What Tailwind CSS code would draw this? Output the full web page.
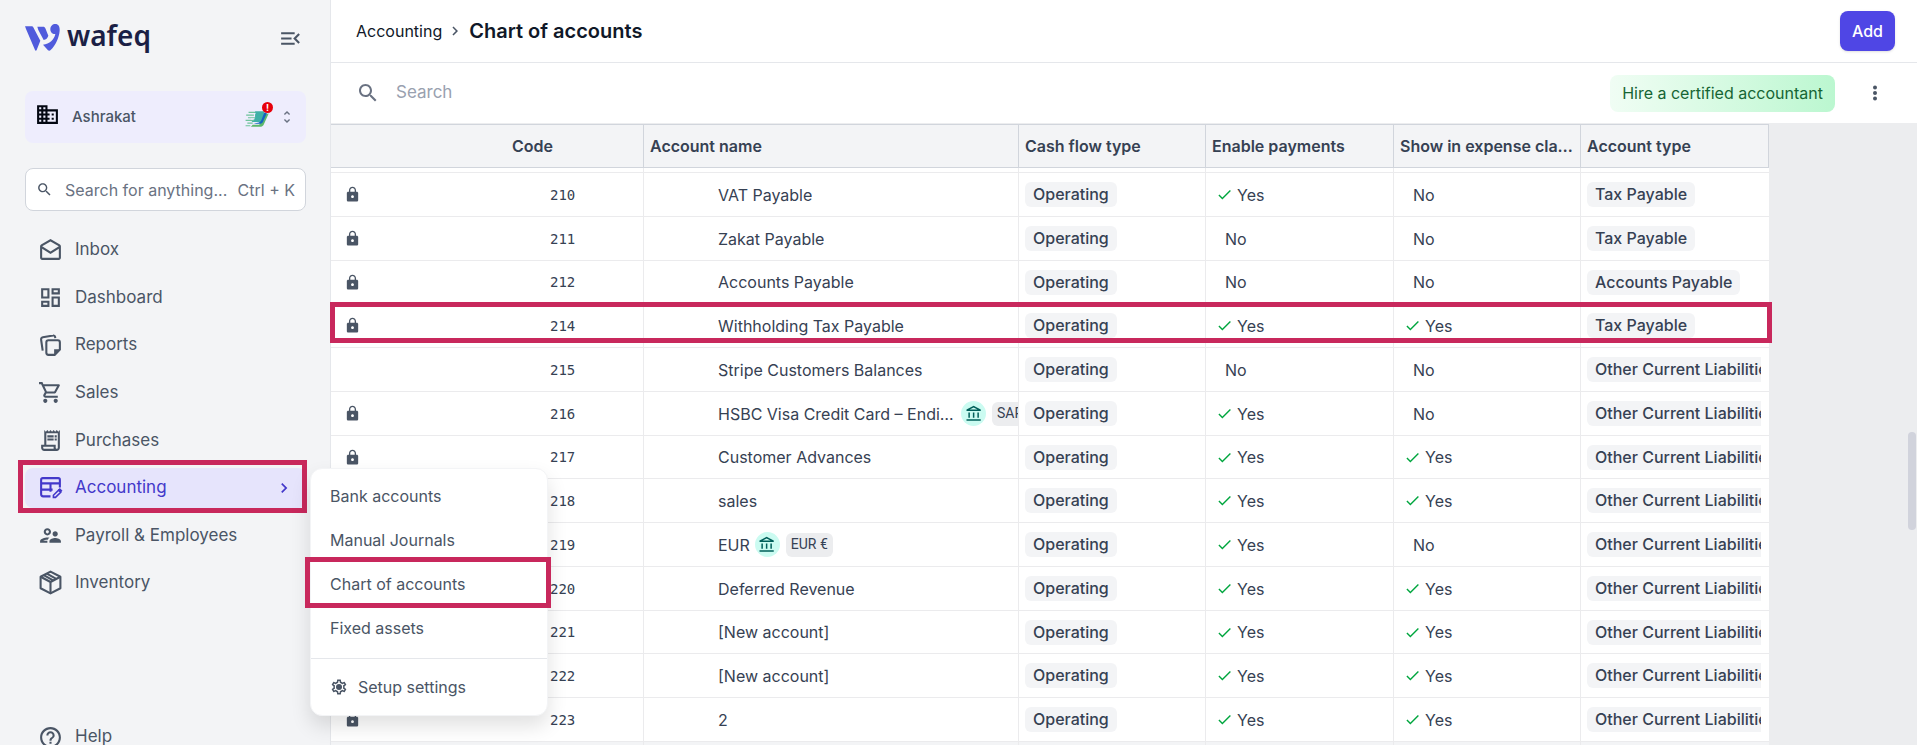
<!DOCTYPE html>
<html lang="en">

<head>
  <meta charset="UTF-8">
  <meta name="viewport" content="width=device-width, initial-scale=1.0">
  <title>Chart of accounts - Wafeq</title>
  <script src="https://cdn.jsdelivr.net/npm/@tailwindcss/browser@4"></script>
</head>

<body class="h-screen overflow-hidden flex bg-[#ecedef] font-['Inter',sans-serif] text-base text-gray-700">

  <!-- icon set -->
  <svg class="hidden" xmlns="http://www.w3.org/2000/svg">
    <symbol id="i-lock" viewBox="0 0 24 24"><path d="M18 8h-1V6c0-2.76-2.24-5-5-5S7 3.24 7 6v2H6c-1.1 0-2 .9-2 2v10c0 1.1.9 2 2 2h12c1.1 0 2-.9 2-2V10c0-1.1-.9-2-2-2zm-6 9c-1.1 0-2-.9-2-2s.9-2 2-2 2 .9 2 2-.9 2-2 2zm3.1-9H8.9V6c0-1.71 1.39-3.1 3.1-3.1 1.71 0 3.1 1.39 3.1 3.1v2z"/></symbol>
    <symbol id="i-search" viewBox="0 0 24 24"><path d="M15.5 14h-.79l-.28-.27C15.41 12.59 16 11.11 16 9.5 16 5.91 13.09 3 9.5 3S3 5.91 3 9.5 5.91 16 9.5 16c1.61 0 3.09-.59 4.23-1.57l.27.28v.79l5 4.99L20.49 19l-4.99-5zm-6 0C7.01 14 5 11.99 5 9.5S7.01 5 9.5 5 14 7.01 14 9.5 11.99 14 9.5 14z"/></symbol>
    <symbol id="i-check" viewBox="0 0 24 24"><path d="M9 16.17L4.83 12l-1.42 1.41L9 19 21 7l-1.41-1.41z"/></symbol>
    <symbol id="i-chevron" viewBox="0 0 24 24"><path d="M10 6L8.59 7.41 13.17 12l-4.58 4.59L10 18l6-6z"/></symbol>
    <symbol id="i-bank" viewBox="0 0 24 24"><path d="M6.5 10h-2v7h2v-7zm6 0h-2v7h2v-7zm8.5 9H2v2h19v-2zm-2.5-9h-2v7h2v-7zm-7-6.74L16.71 6H6.29l5.21-2.74m0-2.26L2 6v2h19V6l-9.5-5z"/></symbol>
  </svg>

  <aside class="w-[331px] shrink-0 h-full flex flex-col pl-[25px] pr-6 bg-gray-100 border-r border-gray-200">
    <div class="h-[91px] flex items-start justify-between pr-[3px]">
      <a href="#" class="flex items-center gap-[7px] pt-[17px]" aria-label="wafeq">
        <svg class="w-[35px] h-[27px] mt-1" viewBox="0 0 105 81" fill="#505bdc">
          <path d="M0 7h19c3 0 5 1 7 5l20 38-11 28c-1 3-4 3-5 0L3 15C2 12 1 9 0 7z"/>
          <path d="M37 8h17c4 0 6 2 7 5l9 22c-2 7-7 12-14 13l-16-30c-1-3-2-7-3-10z"/>
          <path d="M54 62c20-3 33-14 37-32-9 2-15-6-15-14C76 6 83 0 91 0c9 0 14 8 13 20-2 21-12 44-27 58-2 3-6 3-8 1z"/>
        </svg>
        <span class="font-['Noto_Sans'] font-semibold text-[28px] leading-9 text-[#1b1f45]">wafeq</span>
      </a>
      <button type="button" class="pt-[26px] text-gray-600" aria-label="Collapse menu">
        <svg class="size-[25px]" viewBox="0 0 24 24" fill="currentColor"><path d="M3 18h13v-2H3v2zM3 13h10v-2H3v2zm0-7v2h13V6H3zm18 9.59L17.42 12 21 8.41 19.59 7l-5 5 5 5L21 15.59z"/></svg>
      </button>
    </div>

    <button type="button" class="h-[52px] shrink-0 flex items-center rounded-lg bg-[#eeedfd] pl-[10px] pr-[11px]">
      <svg class="size-[25px] mb-[6px] text-gray-950" viewBox="0 0 24 24" fill="currentColor"><path d="M12 7V3H2v18h20V7H12zM6 19H4v-2h2v2zm0-4H4v-2h2v2zm0-4H4V9h2v2zm0-4H4V5h2v2zm4 12H8v-2h2v2zm0-4H8v-2h2v2zm0-4H8V9h2v2zm0-4H8V5h2v2zm10 12h-8v-2h2v-2h-2v-2h2v-2h-2V9h8v10zm-2-8h-2v2h2v-2zm0 4h-2v2h2v-2z"/></svg>
      <span class="ml-3 text-[15px] font-medium text-gray-600">Ashrakat</span>
      <span class="relative ml-auto mr-[10px]">
        <svg class="w-6 h-[17px] mt-[2px]" viewBox="0 0 81 57">
          <path d="M20 56h34c4 0 7-2 9-6L80 12l-14 2-18 36H26z" fill="#5cb86c"/>
          <path d="M28 46h24c4 0 6-2 8-5L74 10l-14-2-12 34z" fill="#1563c0"/>
          <path d="M34 4h33L55 34c-1 4-4 6-8 6H22l12-14z" fill="#3fb0a6"/>
          <path d="M12 8h22M4 17h26M10 26h24M2 35h28M8 44h18M2 53h16" stroke="#6dc39a" stroke-width="4"/>
          <path d="M24 12h12M20 30h12" stroke="#eeedfd" stroke-width="3"/>
        </svg>
        <span class="absolute -right-1 -top-[6px] size-[11px] rounded-full bg-red-600 text-white text-[9px] leading-[11px] font-bold text-center">!</span>
      </span>
      <svg class="size-4 text-gray-500" viewBox="0 0 24 24" fill="currentColor"><path d="M12 5.83L15.17 9l1.41-1.41L12 3 7.41 7.59 8.83 9 12 5.83zm0 12.34L8.83 15l-1.41 1.41L12 21l4.59-4.59L15.17 15 12 18.17z"/></svg>
    </button>

    <label class="mt-[25px] h-[43px] shrink-0 flex items-center rounded-lg bg-white border border-gray-300 pl-[10px] pr-[10px] text-gray-500">
      <svg class="size-[17px] shrink-0 text-gray-600" fill="currentColor"><use href="#i-search"/></svg>
      <input type="text" placeholder="Search for anything..." class="ml-3 flex-1 min-w-0 text-base placeholder:text-gray-500 outline-none">
      <span>Ctrl + K</span>
    </label>

    <nav class="mt-[19px] h-[373px] shrink-0 flex flex-col justify-between text-[17px] text-gray-600">
      <a href="#" class="h-10 flex items-center gap-3 pl-[13px]">
        <svg class="size-[25px]" viewBox="0 0 24 24" fill="currentColor"><path d="M21.99 8c0-.72-.37-1.35-.94-1.7L12 1 2.95 6.3C2.38 6.65 2 7.28 2 8v11c0 1.100.9 2 2 2h16c1.100 0 2-.9 2-2l-.01-11zm-2 0v.01L12 13 4 8l8-4.680L19.990 8zM4 19v-8.660l8 5.020 7.990-4.990L20 19H4z"/></svg>
        Inbox
      </a>
      <a href="#" class="h-10 flex items-center gap-3 pl-[13px]">
        <svg class="size-[25px]" viewBox="0 0 24 24" fill="currentColor"><path d="M19 5v2h-4V5h4M9 5v6H5V5h4m10 8v6h-4v-6h4M9 17v2H5v-2h4M21 3h-8v6h8V3zM11 3H3v10h8V3zm10 8h-8v10h8V11zm-10 4H3v6h8v-6z"/></svg>
        Dashboard
      </a>
      <a href="#" class="h-10 flex items-center gap-3 pl-[13px]">
        <svg class="size-[25px]" viewBox="0 0 24 24" fill="none" stroke="currentColor" stroke-width="2">
          <path d="M16 21H10a2 2 0 0 1-2-2V9a2 2 0 0 1 2-2h9a2 2 0 0 1 2 2v7z"/>
          <path d="M21.500 15.500h-6v6z" fill="currentColor" stroke="none"/>
          <path d="M4.500 17L3 6.500A2 2 0 0 1 4.600 4.100L14.500 2.400a1.600 1.600 0 0 1 1.900 1.300L16.600 5"/>
        </svg>
        Reports
      </a>
      <a href="#" class="h-10 flex items-center gap-3 pl-[13px]">
        <svg class="size-[25px]" viewBox="0 0 24 24" fill="currentColor"><path d="M15.550 13c.75 0 1.410-.41 1.750-1.030l3.580-6.490c.37-.66-.11-1.480-.87-1.480H5.210l-.94-2H1v2h2l3.600 7.590-1.350 2.440C4.520 15.370 5.480 17 7 17h12v-2H7l1.100-2h7.450zM6.160 6h12.150l-2.760 5H8.530L6.160 6zM7 18c-1.100 0-1.990.9-1.990 2S5.900 22 7 22s2-.9 2-2-.9-2-2-2zm10 0c-1.100 0-1.990.9-1.990 2s.89 2 1.990 2 2-.9 2-2-.9-2-2-2z"/></svg>
        Sales
      </a>
      <a href="#" class="h-10 flex items-center gap-3 pl-[13px]">
        <svg class="size-[25px]" viewBox="0 0 24 24" fill="currentColor"><path d="M19.500 3.500L18 2l-1.500 1.500L15 2l-1.500 1.500L12 2l-1.500 1.500L9 2 7.500 3.500 6 2v14H3v3c0 1.660 1.340 3 3 3h12c1.660 0 3-1.340 3-3V2l-1.500 1.500zM15 20H6c-.55 0-1-.45-1-1v-1h10v2zm4-1c0 .55-.45 1-1 1s-1-.45-1-1v-3H8V5h11v14z"/><path d="M9 7h6v2H9zM16 7h2v2h-2zM9 10h6v2H9zM16 10h2v2h-2z"/></svg>
        Purchases
      </a>
      <div class="relative h-10">
        <a href="#" class="h-full flex items-center gap-3 pl-[13px] rounded-lg bg-[#e6e4fc] text-[#4338ca]">
          <svg class="size-[25px]" viewBox="0 0 24 24" fill="none" stroke="currentColor" stroke-width="2">
            <path d="M12 20.500H5a2 2 0 0 1-2-2V4.500a1.500 1.500 0 0 1 1.500-1.500h15A1.500 1.500 0 0 1 21 4.500V12"/>
            <path d="M3 8h18M3 14h11M12 8v8" />
            <path d="M14.800 21.500v-2l5-5 2 2-5 5z" stroke-width="1.500"/>
            <path d="M19 14.500l2-2 2.500 2.500-2 2z" fill="currentColor" stroke="none"/>
          </svg>
          Accounting
          <svg class="ml-auto mr-3 size-5" fill="currentColor"><use href="#i-chevron"/></svg>
        </a>
        <div class="absolute -left-[7px] -right-px -top-2 -bottom-[5px] border-[5px] border-[#c8285c] pointer-events-none"></div>

        <div class="absolute z-20 left-[285px] top-0 w-[238px] rounded-xl bg-white text-base text-gray-600 border border-gray-100 shadow-[0_10px_20px_rgba(0,0,0,0.12)]">
          <div class="pt-[5px] pb-2">
            <a href="#" class="h-11 flex items-center px-[19px]">Bank accounts</a>
            <a href="#" class="h-11 flex items-center px-[19px]">Manual Journals</a>
            <a href="#" class="relative h-11 flex items-center px-[19px]">
              Chart of accounts
              <span class="absolute -left-[6px] -right-[4px] -top-[5px] -bottom-[2px] border-[5px] border-[#c8285c]"></span>
            </a>
            <a href="#" class="h-11 flex items-center px-[19px]">Fixed assets</a>
          </div>
          <div class="py-[6px] border-t border-gray-200">
            <a href="#" class="h-11 flex items-center gap-[10px] px-[19px]">
              <svg class="size-[18px]" viewBox="0 0 24 24" fill="currentColor"><path d="M19.430 12.980c.04-.32.07-.64.07-.98 0-.34-.03-.66-.07-.98l2.110-1.650c.19-.15.24-.42.12-.64l-2-3.460c-.09-.16-.26-.25-.44-.25-.06 0-.12.01-.17.03l-2.490 1c-.52-.4-1.080-.73-1.690-.98l-.38-2.650C14.460 2.180 14.250 2 14 2h-4c-.25 0-.46.18-.49.42l-.38 2.650c-.61.25-1.170.59-1.690.98l-2.490-1c-.06-.02-.12-.03-.18-.03-.17 0-.34.09-.43.25l-2 3.460c-.13.22-.07.49.12.64l2.110 1.650c-.04.32-.07.65-.07.98 0 .33.03.66.07.98l-2.110 1.650c-.19.15-.24.42-.12.64l2 3.460c.09.16.26.25.44.25.06 0 .12-.01.17-.03l2.490-1c.52.4 1.080.73 1.690.98l.38 2.650c.03.24.24.42.49.42h4c.25 0 .46-.18.49-.42l.38-2.650c.61-.25 1.170-.59 1.690-.98l2.490 1c.06.02.12.03.18.03.17 0 .34-.09.43-.25l2-3.460c.12-.22.07-.49-.12-.64l-2.110-1.650zm-1.980-1.710c.04.31.05.52.05.73 0 .21-.02.43-.05.73l-.14 1.130.89.7 1.080.84-.7 1.210-1.270-.51-1.040-.42-.9.68c-.43.32-.84.56-1.250.73l-1.060.43-.16 1.130-.2 1.350h-1.400l-.19-1.350-.16-1.130-1.060-.43c-.43-.18-.83-.41-1.230-.71l-.91-.7-1.060.43-1.270.51-.7-1.210 1.080-.84.89-.7-.14-1.130c-.03-.31-.05-.54-.05-.74s.02-.43.05-.73l.14-1.130-.89-.7-1.080-.84.7-1.210 1.270.51 1.040.42.9-.68c.43-.32.84-.56 1.250-.73l1.060-.43.16-1.130.2-1.350h1.390l.19 1.350.16 1.130 1.060.43c.43.18.83.41 1.230.71l.91.7 1.060-.43 1.270-.51.7 1.210-1.070.85-.89.7.14 1.130z"/><circle cx="12" cy="12" r="4"/></svg>
              Setup settings
            </a>
          </div>
        </div>
      </div>
      <a href="#" class="h-10 flex items-center gap-3 pl-[13px]">
        <svg class="size-[25px]" viewBox="0 0 24 24" fill="currentColor"><path d="M9 12c1.930 0 3.500-1.570 3.500-3.500S10.930 5 9 5 5.500 6.570 5.500 8.500 7.070 12 9 12zm0-5c.83 0 1.500.67 1.500 1.500S9.830 10 9 10s-1.500-.67-1.500-1.500S8.170 7 9 7zm.05 10H4.770c.99-.5 2.700-1 4.230-1 .11 0 .23.01.34.01.34-.73.93-1.330 1.640-1.810-.73-.13-1.420-.2-1.980-.2-2.340 0-7 1.170-7 3.500V19h7v-1.500c0-.17.02-.34.05-.5zm7.450-2.500c-1.840 0-5.500 1.010-5.500 3V19h11v-1.500c0-1.990-3.660-3-5.500-3zm1.210-1.820c.76-.43 1.290-1.240 1.290-2.180C19 9.120 17.880 8 16.500 8S14 9.120 14 10.500c0 .94.53 1.750 1.290 2.180.36.2.77.32 1.210.32s.85-.12 1.210-.32z"/></svg>
        Payroll &amp; Employees
      </a>
      <a href="#" class="h-10 flex items-center gap-3 pl-[13px]">
        <svg class="size-[25px]" viewBox="0 0 24 24" fill="none" stroke="currentColor" stroke-width="2" stroke-linejoin="round">
          <path d="M12 1.500l9.500 5v11l-9.500 5-9.500-5v-11z"/>
          <path d="M2.500 6.500l9.500 5 9.500-5M12 11.500v11M8.500 3.500l9 5M5.500 5l9 5"/>
        </svg>
        Inventory
      </a>
    </nav>

    <a href="#" class="mt-auto -mb-3 h-10 shrink-0 flex items-center gap-3 pl-[13px] text-[17px] text-gray-600">
      <svg class="size-[25px]" viewBox="0 0 24 24" fill="currentColor"><path d="M11 18h2v-2h-2v2zm1-16C6.480 2 2 6.480 2 12s4.480 10 10 10 10-4.480 10-10S17.520 2 12 2zm0 18c-4.410 0-8-3.590-8-8s3.590-8 8-8 8 3.590 8 8-3.590 8-8 8zm0-14c-2.210 0-4 1.790-4 4h2c0-1.100.9-2 2-2s2 .9 2 2c0 2-3 1.750-3 5h2c0-2.250 3-2.500 3-5 0-2.210-1.790-4-4-4z"/></svg>
      Help
    </a>
  </aside>

  <main class="relative flex-1 min-w-0 h-full overflow-clip [overflow-clip-margin:2px]">
    <header class="h-[63px] flex items-center bg-white border-b border-gray-200 pl-[25px] pr-[22px] text-gray-900">
      <a href="#" class="text-base">Accounting</a>
      <svg class="mx-1 size-[18px] text-gray-600" fill="currentColor"><use href="#i-chevron"/></svg>
      <h1 class="ml-px text-xl font-semibold">Chart of accounts</h1>
      <button type="button" class="ml-auto h-10 px-3 rounded-lg bg-[#4f46e5] text-white font-medium shadow-sm">Add</button>
    </header>

    <div class="h-[60px] flex items-center bg-white pl-[25px] pr-[30px]">
      <label for="search" class="text-gray-500" aria-label="Search"><svg class="size-6" fill="currentColor"><use href="#i-search"/></svg></label>
      <input id="search" type="text" placeholder="Search" class="ml-4 flex-1 min-w-0 text-[17px] placeholder:text-gray-400 outline-none">
      <button type="button" class="h-[37px] px-3 rounded-lg bg-linear-to-r from-[#f0fdf4] to-[#bbf7d0] text-[#166534]">Hire a certified accountant</button>
      <button type="button" class="ml-[28px] text-gray-600" aria-label="More">
        <svg class="size-6" viewBox="0 0 24 24" fill="currentColor"><circle cx="12" cy="6.500" r="2"/><circle cx="12" cy="12" r="2"/><circle cx="12" cy="17.500" r="2"/></svg>
      </button>
    </div>

    <div class="relative w-fit mt-px">
      <table class="w-[1438px] table-fixed border-separate border-spacing-0 bg-white">
        <colgroup>
          <col class="w-[175px]">
          <col class="w-[138px]">
          <col class="w-[375px]">
          <col class="w-[187px]">
          <col class="w-[188px]">
          <col class="w-[187px]">
          <col class="w-[188px]">
        </colgroup>
        <thead class="bg-gray-100 text-left">
          <tr class="h-11 [&>th]:border-y [&>th]:border-gray-300 [&>th]:px-[6px] [&>th]:font-semibold [&>th]:truncate">
            <th></th>
            <th class="border-r">Code</th>
            <th class="border-r">Account name</th>
            <th class="border-r">Cash flow type</th>
            <th class="border-r">Enable payments</th>
            <th class="border-r">Show in expense claims</th>
            <th class="border-r">Account type</th>
          </tr>
        </thead>
        <tbody id="accounts" class="[&>tr]:h-11 [&>tr:nth-child(4n)]:h-[43px] [&_td]:border-b [&_td]:border-[#ebebed] [&_td]:p-0"></tbody>
      </table>
      <div class="absolute -left-px -right-[3px] top-[178px] h-[41px] border-[5px] border-[#c8285c] pointer-events-none"></div>
    </div>

    <div class="absolute right-px top-[432px] w-2 h-[98px] rounded-full bg-[#d1d3dc]"></div>
  </main>

  <script>
    const LIABILITIES = "Other Current Liabilities";

    // locked, code, name, payments, expense claims, type, bank currency
    const accounts = [
      [true, "210", "VAT Payable", true, false, "Tax Payable"],
      [true, "211", "Zakat Payable", false, false, "Tax Payable"],
      [true, "212", "Accounts Payable", false, false, "Accounts Payable"],
      [true, "214", "Withholding Tax Payable", true, true, "Tax Payable"],
      [false, "215", "Stripe Customers Balances", false, false, LIABILITIES],
      [true, "216", "HSBC Visa Credit Card – Ending", true, false, LIABILITIES, "SAR"],
      [true, "217", "Customer Advances", true, true, LIABILITIES],
      [false, "218", "sales", true, true, LIABILITIES],
      [false, "219", "EUR", true, false, LIABILITIES, "EUR €"],
      [false, "220", "Deferred Revenue", true, true, LIABILITIES],
      [false, "221", "[New account]", true, true, LIABILITIES],
      [false, "222", "[New account]", true, true, LIABILITIES],
      [true, "223", "2", true, true, LIABILITIES],
    ];

    const lock = `<svg class="ml-[13px] size-[17px] text-gray-600" fill="currentColor"><use href="#i-lock"/></svg>`;

    const flag = (on) => on
      ? `<div class="flex items-center gap-1 pl-[10px]"><svg class="size-[17px] text-green-600" fill="currentColor"><use href="#i-check"/></svg>Yes</div>`
      : `<div class="pl-[19px]">No</div>`;

    const pill = (text) => `<div class="ml-[6px] mr-2 overflow-hidden"><span class="inline-block align-top h-[25px] leading-[25px] px-2 rounded-md bg-gray-100 font-medium whitespace-nowrap">${text}</span></div>`;

    const bank = (currency) => currency
      ? `<span class="ml-[5px] size-[25px] shrink-0 rounded-full bg-teal-100 text-teal-800 flex items-center justify-center"><svg class="size-[18px]" fill="currentColor"><use href="#i-bank"/></svg></span>
         <span class="ml-[6px] h-6 px-[5px] shrink-0 rounded-md bg-[#ecedef] font-['Roboto'] text-sm leading-[22px]">${currency}</span>`
      : "";

    const row = ([locked, code, name, payments, claims, type, currency]) => `
      <tr>
        <td>${locked ? lock : ""}</td>
        <td class="border-r"><div class="pl-[44px] font-['DejaVu_Sans_Mono'] text-sm">${code}</div></td>
        <td class="border-r"><div class="flex items-center pl-[74px] overflow-hidden"><span class="truncate shrink-0 max-w-[238px]">${name}</span>${bank(currency)}</div></td>
        <td class="border-r">${pill("Operating")}</td>
        <td class="border-r">${flag(payments)}</td>
        <td class="border-r">${flag(claims)}</td>
        <td>${pill(type)}</td>
      </tr>`;

    // tail of the row scrolled under the header
    const tail = `<tr class="h-[5px]!"><td></td><td class="border-r"></td><td class="border-r"></td><td class="border-r"></td><td class="border-r"></td><td class="border-r"></td><td></td></tr>`;
    const next = `<tr class="bg-gray-100"><td></td><td class="border-r"></td><td class="border-r"></td><td class="border-r"></td><td class="border-r"></td><td class="border-r"></td><td></td></tr>`;

    document.getElementById("accounts").innerHTML = tail + accounts.map(row).join("") + next;
  </script>

</body>
</html>
